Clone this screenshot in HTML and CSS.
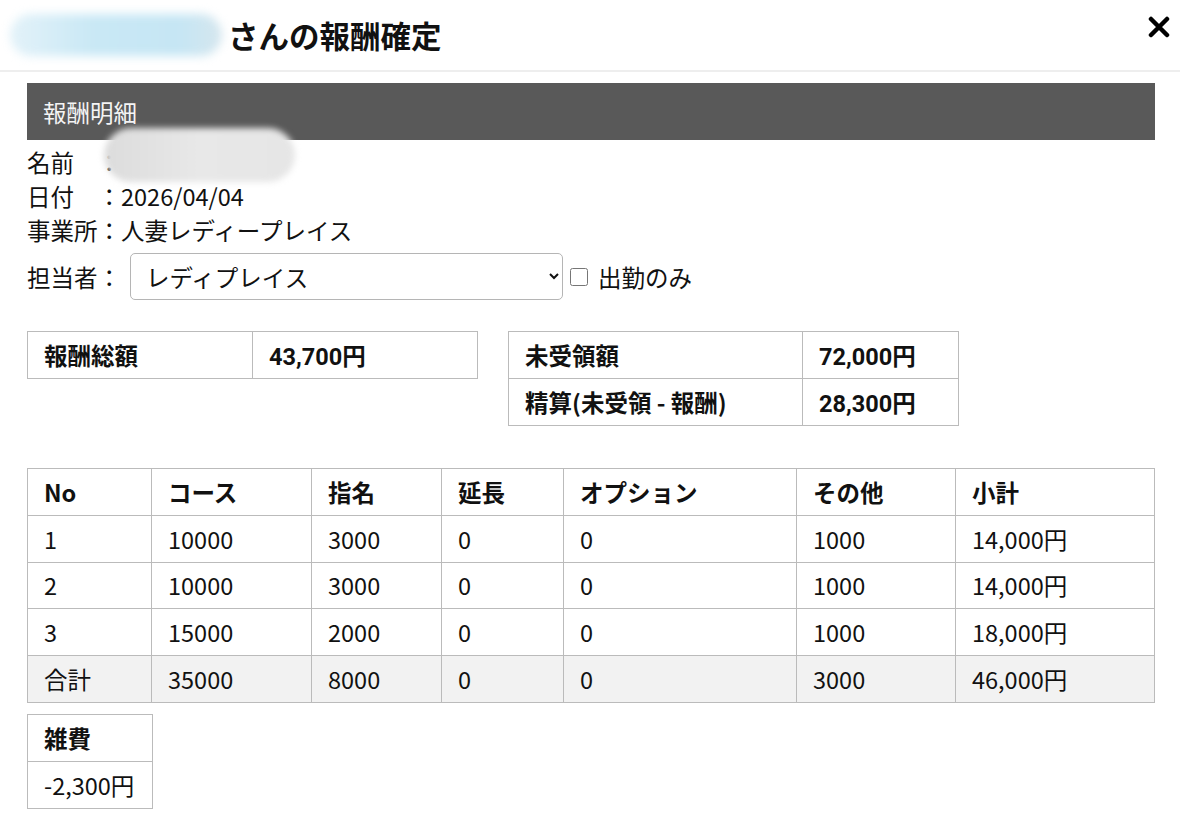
FILE: index.html
```html
<!DOCTYPE html>
<html lang="ja">
<head>
<meta charset="utf-8">
<title>報酬確定</title>
<link rel="stylesheet" href="styles.css">
</head>
<body>
<header class="modal-head">
  <h1 class="title"><span class="blur-name"></span>さんの報酬確定</h1>
  <button class="close" aria-label="close">
    <svg width="22" height="22" viewBox="0 0 22 22"><path d="M3 3 L19 19 M19 3 L3 19" stroke="#000" stroke-width="4.5" stroke-linecap="round"/></svg>
  </button>
</header>
<main class="content">
  <div class="section-bar">報酬明細</div>
  <div class="info">
    <div class="line">名前　<span class="name-wrap">：<span class="blur-grey"></span></span></div>
    <div class="line">日付　：2026/04/04</div>
    <div class="line">事業所：人妻レディープレイス</div>
  </div>
  <div class="staff-row">
    <label class="staff-label">担当者：</label>
    <select class="staff-select"><option>レディプレイス</option></select>
    <input type="checkbox" class="chk" id="chk">
    <label for="chk" class="chk-label">出勤のみ</label>
  </div>
  <div class="summary">
    <table class="sum sum1">
      <tr><th>報酬総額</th><td>43,700円</td></tr>
    </table>
    <table class="sum sum2">
      <tr><th>未受領額</th><td>72,000円</td></tr>
      <tr><th>精算(未受領 - 報酬)</th><td>28,300円</td></tr>
    </table>
  </div>
  <table class="detail">
    <colgroup>
      <col style="width:124px"><col style="width:160px"><col style="width:130px"><col style="width:122px"><col style="width:233px"><col style="width:159px"><col>
    </colgroup>
    <tr class="hdr"><th>No</th><th>コース</th><th>指名</th><th>延長</th><th>オプション</th><th>その他</th><th>小計</th></tr>
    <tr><td>1</td><td>10000</td><td>3000</td><td>0</td><td>0</td><td>1000</td><td>14,000円</td></tr>
    <tr><td>2</td><td>10000</td><td>3000</td><td>0</td><td>0</td><td>1000</td><td>14,000円</td></tr>
    <tr><td>3</td><td>15000</td><td>2000</td><td>0</td><td>0</td><td>1000</td><td>18,000円</td></tr>
    <tr class="total"><td>合計</td><td>35000</td><td>8000</td><td>0</td><td>0</td><td>3000</td><td>46,000円</td></tr>
  </table>
  <table class="misc">
    <tr><th>雑費</th></tr>
    <tr><td>-2,300円</td></tr>
  </table>
</main>
</body>
</html>
```
FILE: styles.css
```css
* { box-sizing: border-box; }
body {
  margin: 0;
  background: #fff;
  color: #111;
  font-family: "Noto Sans CJK JP", "Noto Sans", sans-serif;
  font-size: 23.5px;
  overflow: hidden;
}
.modal-head {
  height: 72px;
  display: flex;
  align-items: center;
  justify-content: space-between;
  border-bottom: 2px solid #eeeeee;
  padding: 0 8px 0 10px;
}
.title {
  margin: 0;
  font-size: 30.5px;
  font-weight: 700;
  display: flex;
  align-items: center;
  letter-spacing: 0;
}
.blur-name {
  display: inline-block;
  width: 212px;
  height: 42px;
  margin-right: 6px;
  border-radius: 22px;
  background: linear-gradient(90deg, #e3f2f9, #c9e8f5 40%, #c6e6f4 80%, #d5e6ee);
  filter: blur(5px);
}
.close {
  border: 0;
  background: none;
  padding: 0;
  width: 26px;
  height: 26px;
  display: flex;
  align-items: center;
  justify-content: center;
  margin-top: -16px;
}
.content {
  padding: 0 25px 0 27px;
}
.section-bar {
  margin-top: 11px;
  height: 57px;
  background: #595959;
  color: #f4f4f4;
  display: flex;
  align-items: center;
  padding-left: 16px;
  font-size: 23.5px;
}
.info {
  padding-top: 5px;
}
.line {
  line-height: 34px;
  height: 34px;
}
.name-wrap {
  position: relative;
}
.blur-grey {
  position: absolute;
  left: 6px;
  top: -17px;
  width: 191px;
  height: 54px;
  border-radius: 27px;
  background: linear-gradient(90deg, #dcdcdc, #e8e8e8 50%, #e6e6e6);
  filter: blur(3px);
}
.staff-row {
  display: flex;
  align-items: center;
  margin-top: 6px;
  height: 47px;
}
.staff-label {
  width: 103px;
}
.staff-select {
  width: 433px;
  height: 47px;
  font-family: inherit;
  font-size: 23.5px;
  color: #111;
  padding-left: 11px;
  border: 1px solid #b5b5b5;
  border-radius: 5px;
  background: #fff;
}
.chk {
  width: 18px;
  height: 18px;
  margin: 0 10px 0 7px;
}
.chk-label {
  font-size: 23.5px;
}
.summary {
  display: flex;
  align-items: flex-start;
  gap: 30px;
  margin-top: 31px;
}
table {
  border-collapse: collapse;
}
.sum th, .sum td {
  border: 1px solid #bbbbbb;
  height: 47px;
  padding: 0 16px;
  text-align: left;
  font-weight: 700;
}
.sum1 { width: 451px; }
.sum1 th { width: 225px; }
.sum2 { width: 451px; }
.sum2 th { width: 294px; }
.sum td { font-family: Roboto, "Noto Sans CJK JP", sans-serif; }
.detail {
  margin-top: 42px;
  width: 1128px;
  table-layout: fixed;
}
.detail th, .detail td {
  border: 1px solid #bbbbbb;
  height: 46.8px;
  padding: 0 16px;
  text-align: left;
}
.detail th { font-weight: 700; }
.detail td { font-weight: 400; }
.detail .total td { background: #f2f2f2; }
.misc {
  margin-top: 11px;
  width: 126px;
}
.misc th, .misc td {
  border: 1px solid #bbbbbb;
  height: 47px;
  padding: 0 16px;
  text-align: left;
}
.misc th { font-weight: 700; }
```
